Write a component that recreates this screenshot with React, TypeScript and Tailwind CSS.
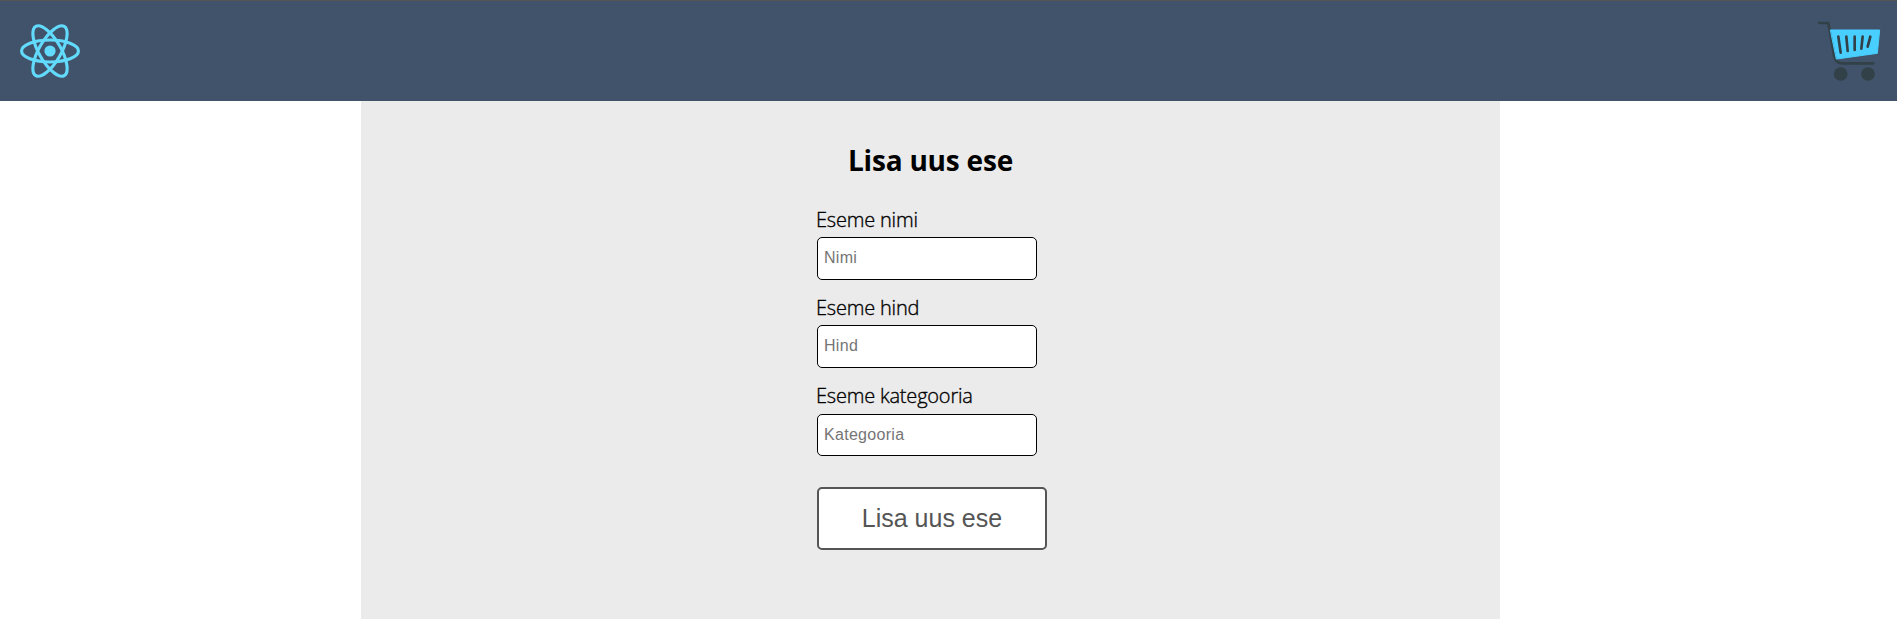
const fields = [
  { label: 'Eseme nimi', hint: 'Nimi', size: 'h-[43px] mb-[11px]' },
  { label: 'Eseme hind', hint: 'Hind', size: 'h-[43px] mb-[11px]' },
  { label: 'Eseme kategooria', hint: 'Kategooria', size: 'mt-px h-[42px]' },
];

function ReactLogo() {
  return (
    <svg className="h-[54px] w-[60px]" viewBox="-11.5 -10.35 23 20.7" fill="none" stroke="#61dafb">
      <circle r="2.15" fill="#61dafb" stroke="none" />
      <ellipse rx="10.9" ry="4.2" strokeWidth="1.2" />
      <ellipse rx="10.9" ry="4.2" strokeWidth="1.2" transform="rotate(60)" />
      <ellipse rx="10.9" ry="4.2" strokeWidth="1.2" transform="rotate(120)" />
    </svg>
  );
}

function CartIcon() {
  return (
    <svg className="h-[62px] w-[64px]" viewBox="60 59 192 186" fill="none" stroke="#324148" strokeWidth="8" strokeLinecap="round" strokeLinejoin="round">
      <path d="M67 68H94L111 165Q115 189 134 189H229" />
      <path d="M101 89H248L241 159L119 176Z" fill="#48ceff" stroke="#48ceff" strokeWidth="3" />
      <path d="M124 109L131 157M148 109L152 152M173 109V149M197 109L193 145M220 109L212 139" strokeWidth="8" />
      <circle cx="131" cy="221" r="20.5" fill="#324148" stroke="none" />
      <circle cx="213" cy="221" r="20.5" fill="#324148" stroke="none" />
    </svg>
  );
}

export default function App() {
  return (
    <div className="flex h-[619px] flex-col overflow-hidden bg-white text-black">
      <header className="flex h-[101px] shrink-0 items-center justify-between border-t border-[#555] bg-[#41536a] pl-5 pr-4">
        <ReactLogo />
        <CartIcon />
      </header>
      <main className="ml-[361px] flex w-[1139px] grow flex-col items-center bg-[#ebebeb] pt-[39px]">
        <h1 className="h-[41px] whitespace-nowrap font-['Open_Sans','Noto_Sans',sans-serif] text-[28px] font-bold leading-[41px] tracking-[-0.2px]">
          Lisa uus ese
        </h1>
        <form className="ml-[3px] mt-[22px] flex w-[230px] flex-col items-start" onSubmit={(e) => e.preventDefault()}>
          {fields.map((f) => (
            <label key={f.hint} className="flex flex-col">
              <span className="-ml-px h-[34px] whitespace-nowrap font-['Open_Sans','Noto_Sans',sans-serif] text-[20px] font-light leading-[33px] tracking-[-0.2px] [-webkit-text-stroke:0.35px_black]">
                {f.label}
              </span>
              <input
                placeholder={f.hint}
                className={`w-[220px] rounded-[5px] border border-black bg-white px-1.5 pb-px font-['Liberation_Sans',Arial,sans-serif] text-base tracking-[0.3px] placeholder:text-[#757575] ${f.size}`}
              />
            </label>
          ))}
          <button className="mt-[31px] h-[63px] w-[230px] rounded-[5px] border-2 border-[#555] bg-white font-['Liberation_Sans',Arial,sans-serif] text-[25px] text-[#555]">
            Lisa uus ese
          </button>
        </form>
      </main>
    </div>
  );
}
